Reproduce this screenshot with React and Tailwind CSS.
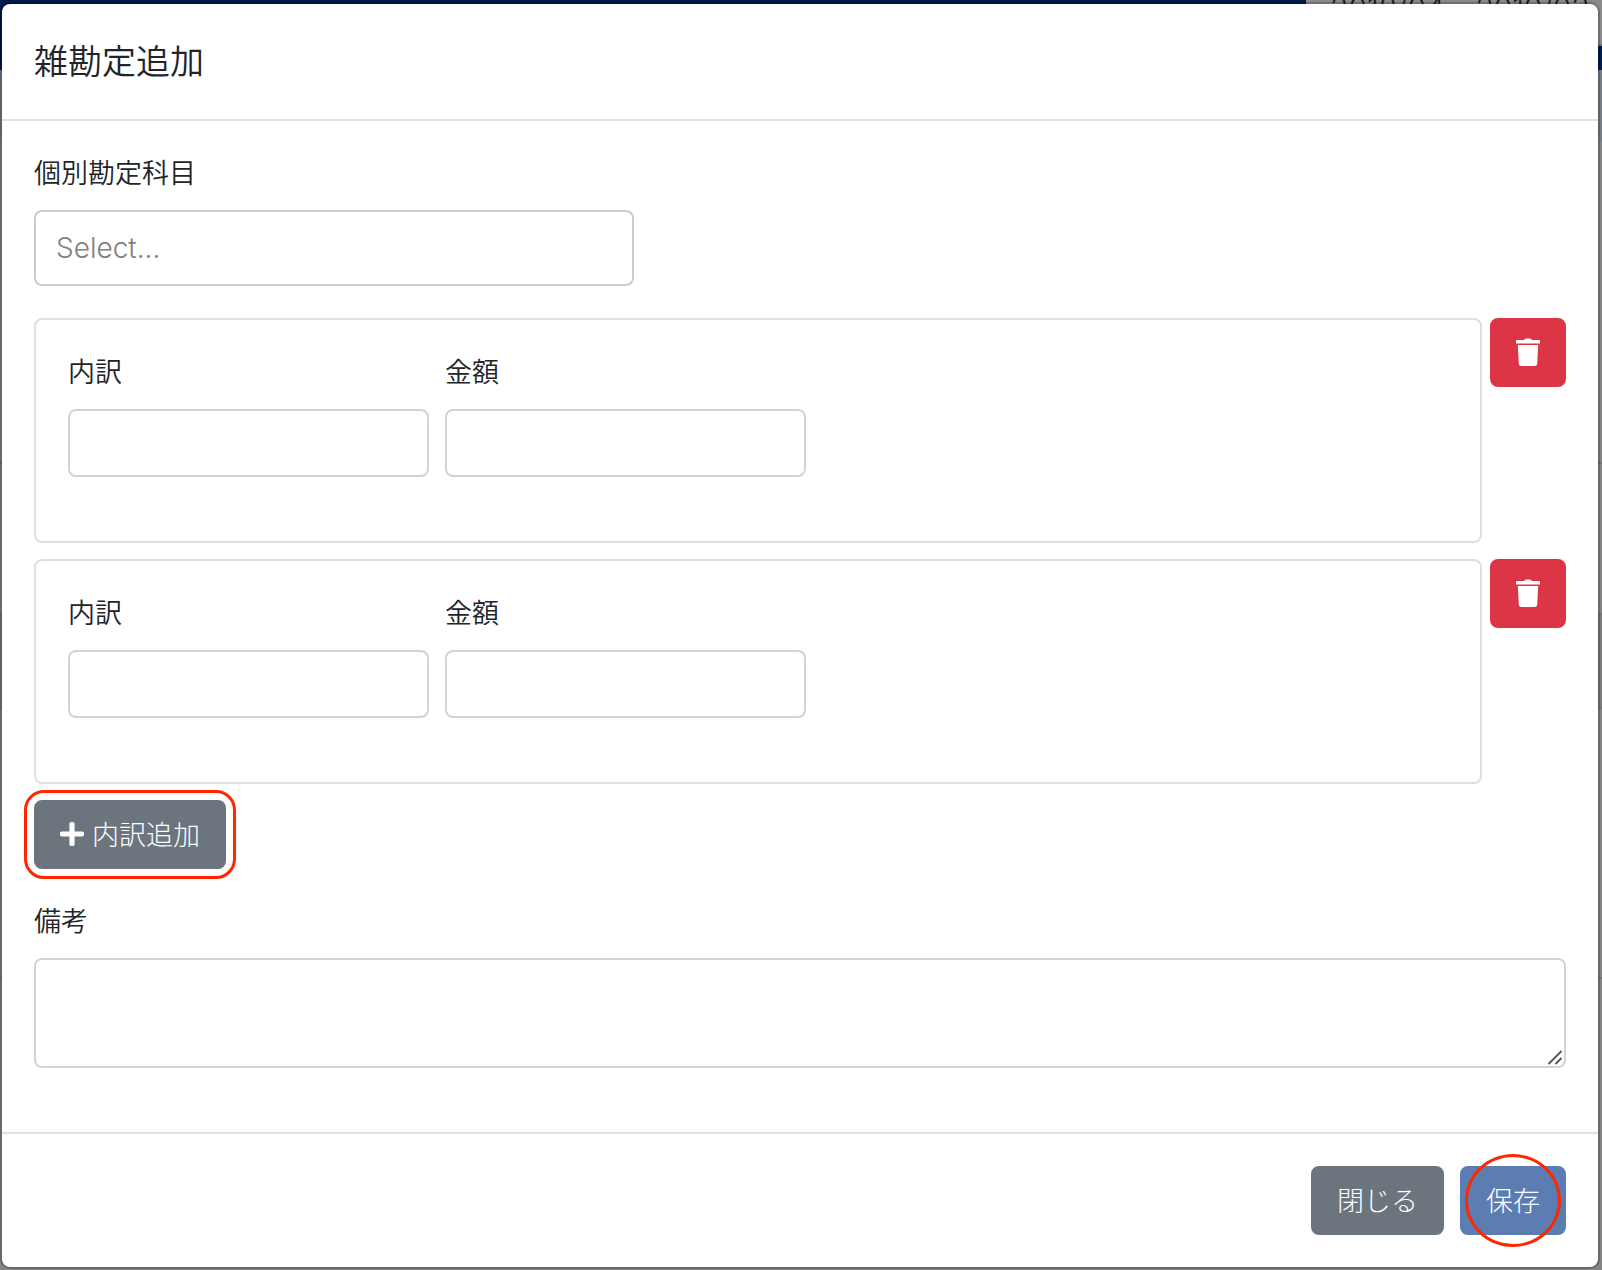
import React, { useState } from "react";
import { FaPlus } from "react-icons/fa";

const labelClass = "block text-[27px] leading-[37px] mb-5";
const inputClass =
  "block w-full h-[68px] px-6 text-[27px] border-2 border-[#ced4da] rounded-lg bg-white";
const buttonClass =
  "relative h-[69px] px-6 pb-[2px] border-2 rounded-lg font-light text-[27px] leading-[41px] text-white";

function TrashIcon() {
  return (
    <svg viewBox="0 0 24 28" className="w-6 h-7" fill="currentColor">
      <path d="M1 2h6.6c.6 0 .9-.3 1.3-.7.5-.6.9-.8 1.6-.8h3c.7 0 1.1.2 1.6.8.4.4.7.7 1.3.7H23a1 1 0 0 1 1 1v2a.5.5 0 0 1-.5.5H.5A.5.5 0 0 1 0 5V3a1 1 0 0 1 1-1z" />
      <path d="M1.8 7h20.4l-1 18.4a2.6 2.6 0 0 1-2.6 2.5H5.4a2.6 2.6 0 0 1-2.6-2.5z" />
    </svg>
  );
}

// One breakdown card with its delete button
function BreakdownRow({ id, onDelete }) {
  return (
    <div className="flex items-start gap-2 mb-4">
      <div className="flex-1 flex gap-4 px-8 pt-8 pb-16 border-2 border-[#dfdfdf] rounded-lg">
        <div className="w-[361px]">
          <label htmlFor={`item-${id}`} className={labelClass}>
            内訳
          </label>
          <input id={`item-${id}`} type="text" className={inputClass} />
        </div>
        <div className="w-[361px]">
          <label htmlFor={`amount-${id}`} className={labelClass}>
            金額
          </label>
          <input id={`amount-${id}`} type="text" className={inputClass} />
        </div>
      </div>
      <button
        type="button"
        aria-label="削除"
        onClick={onDelete}
        className={`${buttonClass} border-[#dc3545] bg-[#dc3545]`}
      >
        <TrashIcon />
      </button>
    </div>
  );
}

// Dimmed page that shows around the dialog
function PageBehind() {
  return (
    <div className="min-h-screen bg-[#848484]">
      <div className="flex justify-end h-[70px] bg-[#001a4a]">
        <div className="w-[296px] h-[46px] pl-6 whitespace-nowrap border-b-2 border-[#6e6e6e] bg-[#8a8a8a] font-['Inter',sans-serif] text-[30px] leading-4 text-[#1a1a1a]">
          2018/04 - 2019/03
        </div>
      </div>
      <div className="h-[72px] bg-[#747e84]" />
      <div className="h-[322px] border-b-2 border-[#727476]" />
      <div className="h-[149px]" />
      <div className="h-24 border-y-2 border-[#727476] bg-[#797b7d]" />
      <div className="h-[270px] border-b-2 border-[#727476]" />
    </div>
  );
}

function App() {
  const [rows, setRows] = useState([1, 2]);

  const addRow = () => setRows((prev) => [...prev, Math.max(0, ...prev) + 1]);
  const deleteRow = (id) => setRows((prev) => prev.filter((r) => r !== id));

  return (
    <div className="relative font-['Noto_Sans_CJK_JP',sans-serif] font-[350] text-[#212529]">
      <PageBehind />
      <div className="absolute inset-0 pt-1 pl-[2px] pr-1">
        <div
          role="dialog"
          aria-labelledby="dialog-title"
          className="bg-white rounded-lg shadow-[0_0_0_2px_rgba(0,0,0,0.2)]"
        >
          <header className="px-8 pt-8 pb-9 border-b-2 border-[#dee2e6]">
            <h5 id="dialog-title" className="text-[34px] leading-[47px]">
              雑勘定追加
            </h5>
          </header>

          <div className="p-8">
            <label htmlFor="account" className={labelClass}>
              個別勘定科目
            </label>
            <select
              id="account"
              defaultValue=""
              className="block w-[600px] h-[76px] mb-8 pl-5 appearance-none border-2 border-[#cccccc] rounded-lg bg-white font-['Inter',sans-serif] font-light text-[28px] text-[#808080]"
            >
              <option value="">Select...</option>
            </select>

            {rows.map((id) => (
              <BreakdownRow key={id} id={id} onDelete={() => deleteRow(id)} />
            ))}

            <button
              type="button"
              onClick={addRow}
              className={`${buttonClass} flex items-center gap-2 mb-8 border-[#6c757d] bg-[#6c757d]`}
            >
              <FaPlus className="w-6 h-7" />
              内訳追加
              <span className="absolute -inset-3 border-3 border-[#ff2600] rounded-[20px]" />
            </button>

            <label htmlFor="note" className={labelClass}>
              備考
            </label>
            <div className="relative mb-8">
              <textarea
                id="note"
                className="block w-full h-[110px] px-6 py-3 text-[27px] resize-none border-2 border-[#ced4da] rounded-lg bg-white"
              />
              <svg
                viewBox="0 0 16 16"
                className="absolute right-[3px] bottom-[3px] w-4 h-4 pointer-events-none"
                fill="none"
                stroke="#555"
                strokeWidth="1.8"
              >
                <path d="M1.5 15 14.5 2M8.5 15l6-6" />
              </svg>
            </div>
          </div>

          <footer className="flex justify-end gap-4 p-8 border-t-2 border-[#dee2e6]">
            <button
              type="button"
              className={`${buttonClass} border-[#6c757d] bg-[#6c757d]`}
            >
              閉じる
            </button>
            <button
              type="button"
              className={`${buttonClass} border-[#5b7db1] bg-[#5b7db1]`}
            >
              保存
              <span className="absolute inset-x-[3px] -inset-y-[14px] border-3 border-[#ff2600] rounded-[50%]" />
            </button>
          </footer>
        </div>
      </div>
    </div>
  );
}

export default App;
